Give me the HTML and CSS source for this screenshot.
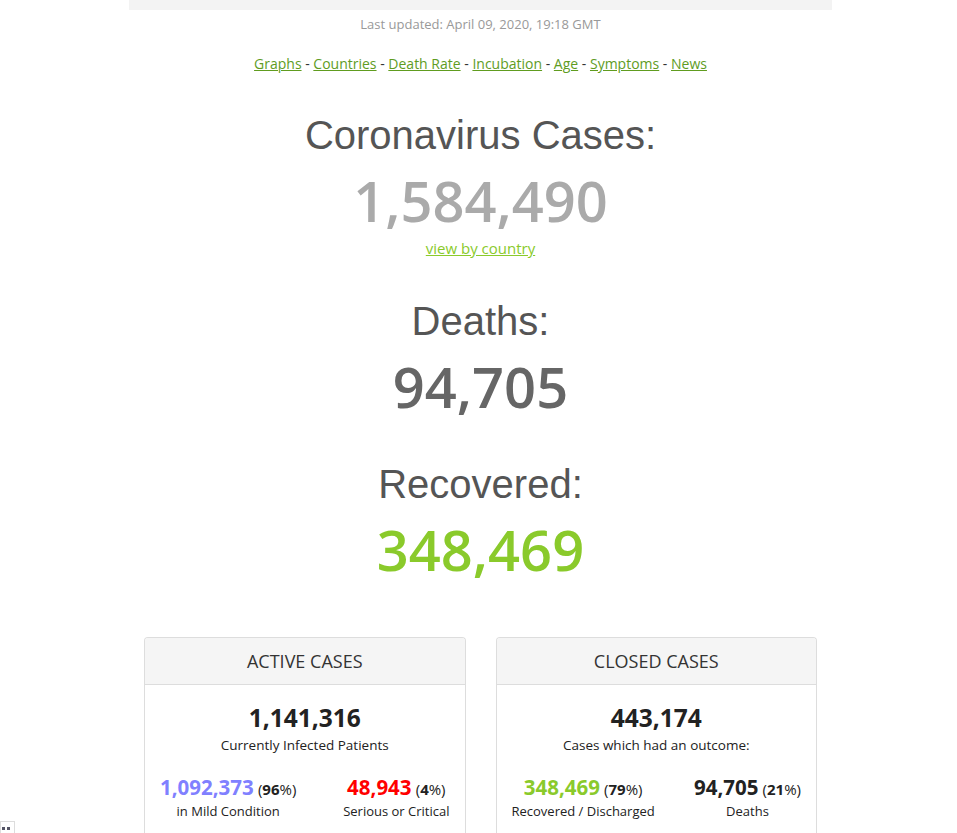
FILE: index.html
```html
<!DOCTYPE html>
<html>
<head>
<meta charset="utf-8">
<link rel="stylesheet" href="styles.css">
</head>
<body>
<div class="container">
  <div class="topbar"></div>
  <div class="updated">Last updated: April 09, 2020, 19:18 GMT</div>
  <div class="nav">
    <a href="#">Graphs</a> - <a href="#">Countries</a> - <a href="#">Death Rate</a> - <a href="#">Incubation</a> - <a href="#">Age</a> - <a href="#">Symptoms</a> - <a href="#">News</a>
  </div>

  <div class="counter first">
    <h1>Coronavirus Cases:</h1>
    <div class="number cases">1,584,490</div>
    <div class="viewby-row"><a class="viewby" href="#">view by country</a></div>
  </div>
  <div class="counter">
    <h1>Deaths:</h1>
    <div class="number deaths">94,705</div>
  </div>
  <div class="counter">
    <h1>Recovered:</h1>
    <div class="number recovered">348,469</div>
  </div>

  <div class="panels">
    <div class="panel">
      <div class="panel-head">ACTIVE CASES</div>
      <div class="panel-body">
        <div class="big">1,141,316</div>
        <div class="desc">Currently Infected Patients</div>
        <div class="split">
          <div class="part">
            <div><span class="num mild">1,092,373</span> <span class="pct">(<b>96</b>%)</span></div>
            <div class="label">in Mild Condition</div>
          </div>
          <div class="part">
            <div><span class="num serious">48,943</span> <span class="pct">(<b>4</b>%)</span></div>
            <div class="label">Serious or Critical</div>
          </div>
        </div>
      </div>
    </div>
    <div class="panel">
      <div class="panel-head">CLOSED CASES</div>
      <div class="panel-body">
        <div class="big">443,174</div>
        <div class="desc">Cases which had an outcome:</div>
        <div class="split">
          <div class="part">
            <div><span class="num rec">348,469</span> <span class="pct">(<b>79</b>%)</span></div>
            <div class="label">Recovered / Discharged</div>
          </div>
          <div class="part">
            <div><span class="num dead">94,705</span> <span class="pct">(<b>21</b>%)</span></div>
            <div class="label">Deaths</div>
          </div>
        </div>
      </div>
    </div>
  </div>
</div>
<div class="corner"><span></span><span></span></div>
</body>
</html>
```
FILE: styles.css
```css
html, body {
  margin: 0;
  padding: 0;
  background: #fff;
}
body {
  font-family: "Open Sans", "Liberation Sans", sans-serif;
  color: #333;
  overflow: hidden;
  height: 833px;
}
.container {
  width: 703px;
  margin-left: 129px;
  text-align: center;
}
.topbar {
  height: 10px;
  background: #f3f3f3;
}
.updated {
  font-size: 13px;
  color: #999;
  line-height: 18px;
  margin-top: 5px;
}
.nav {
  font-size: 14px;
  line-height: 20px;
  margin-top: 21px;
  color: #333;
}
.nav a {
  color: #609c1f;
  text-decoration: underline;
}
.counter {
  margin-top: 40px;
}
.counter.first {
  margin-top: 38px;
}
.counter h1 {
  font-family: "Liberation Sans", Arial, sans-serif;
  font-weight: normal;
  font-size: 40px;
  line-height: 46px;
  color: #555;
  margin: 0;
}
.number {
  font-family: "Open Sans", sans-serif;
  font-weight: 600;
  font-size: 56px;
  line-height: 70px;
  margin-top: 7px;
}
.cases { color: #aaa; }
.deaths { color: #666; }
.recovered { color: #8aca2b; }
.viewby-row {
  font-size: 15px;
  line-height: 20px;
  margin-top: 3px;
}
.viewby {
  color: #8aca2b;
  text-decoration: underline;
}
.panels {
  display: flex;
  gap: 30px;
  padding: 0 15px;
  margin-top: 53px;
}
.panel {
  flex: 1;
  border: 1px solid #ddd;
  border-radius: 4px 4px 0 0;
  border-bottom: none;
  height: 220px;
}
.panel-head {
  background: #f5f5f5;
  border-bottom: 1px solid #ddd;
  border-radius: 3px 3px 0 0;
  height: 46px;
  line-height: 46px;
  font-size: 18px;
  color: #333;
}
.panel-body {
  padding: 21px 15px 0;
}
.big {
  font-size: 24.5px;
  font-weight: bold;
  color: #222;
  line-height: 24px;
}
.desc {
  font-size: 13.5px;
  line-height: 20px;
  color: #222;
  margin-top: 5px;
}
.split {
  display: flex;
  justify-content: space-between;
  margin-top: 20px;
}
.part {
  text-align: center;
}
.num {
  font-size: 20.5px;
  font-weight: bold;
  line-height: 24px;
}
.pct {
  font-size: 15px;
  color: #222;
}
.mild { color: #8080ff; }
.serious { color: #ff0000; }
.rec { color: #8aca2b; }
.dead { color: #222; }
.label {
  font-size: 13px;
  line-height: 22px;
  color: #222;
}
.corner {
  position: fixed;
  left: 0;
  top: 821px;
  width: 15px;
  height: 14px;
  border: 1px solid #ddd;
  background: #fff;
  display: flex;
  gap: 2px;
  padding: 5px 0 0 1px;
  box-sizing: border-box;
}
.corner span {
  width: 3px;
  height: 3px;
  background: #556;
}
```
